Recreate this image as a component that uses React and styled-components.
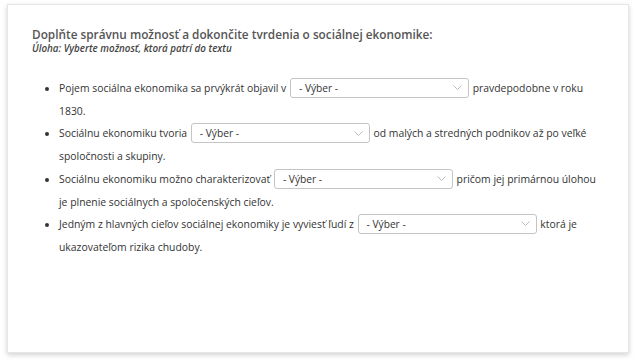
import React from "react";
import styled, { createGlobalStyle } from "styled-components";

const Global = createGlobalStyle`
  html, body { margin: 0; padding: 0; background: #fff; }
  body { font-family: "Open Sans", "Noto Sans", sans-serif; }
`;

const Page = styled.div`
  padding: 4px 7px 11px 7px;
  width: 636px;
  height: 364px;
  box-sizing: border-box;
`;

const Card = styled.div`
  background: #fff;
  height: 349px;
  box-sizing: border-box;
  border: 1px solid #e6e6e6;
  box-shadow: 0 2px 5px rgba(0, 0, 0, 0.18);
  padding: 21px 24px 20px 24px;
  color: #333;
`;

const Title = styled.h2`
  margin: 0;
  font-size: 11.8px;
  font-weight: 600;
  color: #555;
  line-height: 16px;
`;

const Subtitle = styled.div`
  font-size: 9.8px;
  font-style: italic;
  font-weight: 600;
  color: #444;
  line-height: 13px;
`;

const List = styled.ul`
  margin: 22px 0 0 0;
  padding-left: 27px;
  font-size: 10.4px;
  line-height: 22.7px;
  color: #333;
  li::marker { font-size: 10px; }
`;

const Item = styled.li`
  margin: 0;
`;

const SelectBox = styled.span`
  display: inline-flex;
  align-items: center;
  justify-content: space-between;
  box-sizing: border-box;
  width: 179px;
  height: 20px;
  vertical-align: middle;
  margin: -3px 1px 0 1px;
  border: 1px solid #c4c4c4;
  border-radius: 3px;
  padding: 0 6px 0 8px;
  font-size: 10.2px;
  line-height: 18px;
  color: #333;
  background: #fff;
`;

const Chevron = () => (
  <svg width="9" height="5" viewBox="0 0 9 5">
    <path d="M0.5 0.5 L4.5 4.5 L8.5 0.5" fill="none" stroke="#bbb" strokeWidth="1" />
  </svg>
);

const Select = () => (
  <SelectBox>
    <span>- Výber -</span>
    <Chevron />
  </SelectBox>
);

export default function App() {
  return (
    <>
      <Global />
      <Page>
        <Card>
          <Title>Doplňte správnu možnosť a dokončite tvrdenia o sociálnej ekonomike:</Title>
          <Subtitle>Úloha: Vyberte možnosť, ktorá patrí do textu</Subtitle>
          <List>
            <Item>
              Pojem sociálna ekonomika sa prvýkrát objavil v <Select /> pravdepodobne v roku 1830.
            </Item>
            <Item>
              Sociálnu ekonomiku tvoria <Select /> od malých a stredných podnikov až po veľké spoločnosti a skupiny.
            </Item>
            <Item>
              Sociálnu ekonomiku možno charakterizovať <Select /> pričom jej primárnou úlohou je plnenie sociálnych a spoločenských cieľov.
            </Item>
            <Item>
              Jedným z hlavných cieľov sociálnej ekonomiky je vyviesť ľudí z <Select /> ktorá je ukazovateľom rizika chudoby.
            </Item>
          </List>
        </Card>
      </Page>
    </>
  );
}
